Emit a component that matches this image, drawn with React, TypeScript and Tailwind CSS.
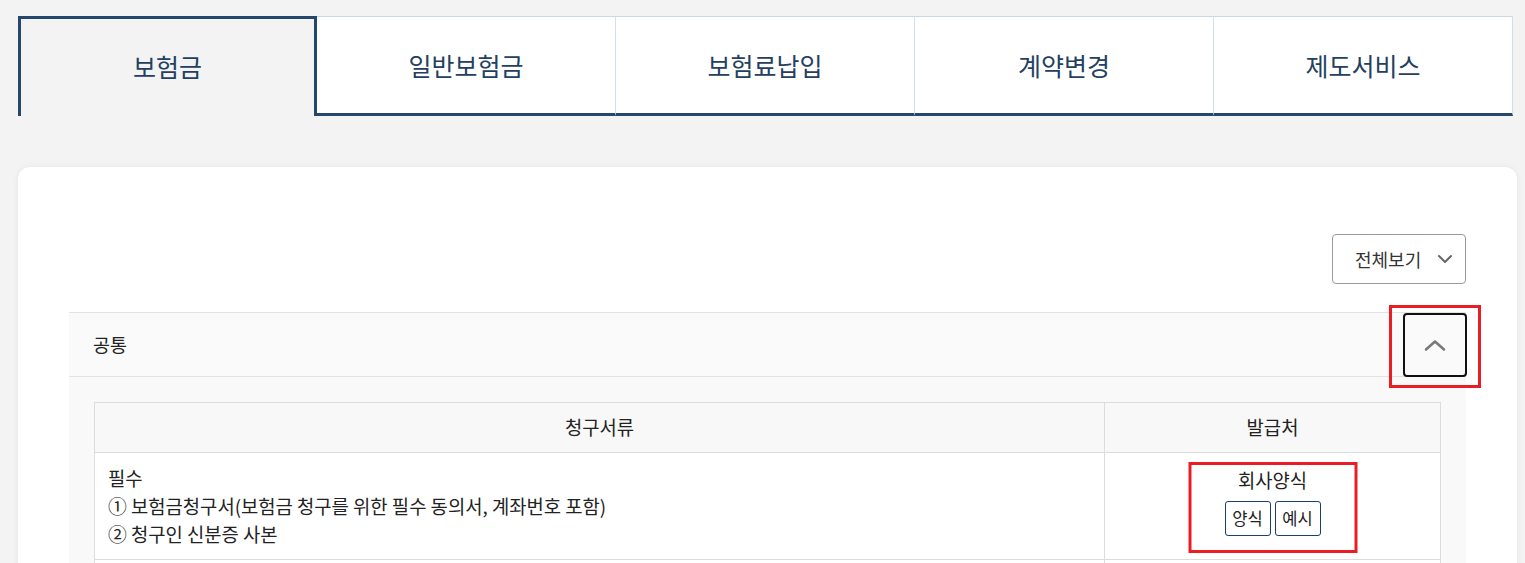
import React, { useState } from 'react';

const tabs = ['보험금', '일반보험금', '보험료납입', '계약변경', '제도서비스'];

const font = { fontFamily: '"Noto Sans CJK KR", "Noto Sans", sans-serif' };

const ChevronDown = () => (
    <svg width="16" height="10" viewBox="0 0 16 10" fill="none">
        <path d="M2 2l6 6 6-6" stroke="#666" strokeWidth="2" strokeLinecap="round" strokeLinejoin="round" />
    </svg>
);

const ChevronUp = () => (
    <svg width="22" height="14" viewBox="0 0 22 14" fill="none">
        <path d="M2 11.5l9-8 9 8" stroke="#7a7a7a" strokeWidth="2.6" strokeLinecap="round" strokeLinejoin="round" />
    </svg>
);

const App = () => {
    const [active, setActive] = useState(0);
    const [open, setOpen] = useState(true);

    return (
        <div className="min-h-[563px] w-full overflow-hidden bg-[#f3f3f3] pt-4" style={font}>
            {/* tabs */}
            <div className="ml-[18px] flex w-[1495px]">
                {tabs.map((t, i) =>
                    i === active ? (
                        <button
                            key={t}
                            onClick={() => setActive(i)}
                            className="flex h-[100px] w-[299px] shrink-0 items-center justify-center border-x-[3px] border-t-[3px] border-[#26476d] bg-[#f3f3f3] pb-[2px] text-[25px] text-[#243f60]"
                        >
                            {t}
                        </button>
                    ) : (
                        <button
                            key={t}
                            onClick={() => setActive(i)}
                            className="flex h-[100px] w-[299px] shrink-0 items-center justify-center border-t border-r border-b-[3px] border-t-[#c8d6e5] border-r-[#d3dee9] border-b-[#26476d] bg-white pt-[2px] text-[25px] text-[#243f60]"
                        >
                            {t}
                        </button>
                    )
                )}
            </div>

            {/* card */}
            <div className="ml-[18px] mt-[51px] w-[1499px] rounded-xl bg-white px-[51px] pt-[67px] pb-10 shadow-[0_0_6px_rgba(0,0,0,0.06)]">
                <div className="flex justify-end">
                    <button className="flex h-[50px] w-[134px] items-center justify-between rounded border border-[#9a9a9a] bg-white pl-[22px] pr-[12px] text-[18px] text-[#333]">
                        <span>전체보기</span>
                        <ChevronDown />
                    </button>
                </div>

                <div className="mt-[28px]">
                    <div className="flex h-[65px] items-center justify-between border-y border-[#e2e2e2] bg-[#fafafa] pl-6">
                        <span className="text-[18.5px] text-[#222]">공통</span>
                        <div className="relative -mr-px">
                            <button
                                onClick={() => setOpen(!open)}
                                className="flex h-[64px] w-[64px] items-center justify-center rounded border-2 border-[#111] bg-[#fafafa]"
                            >
                                {open ? <ChevronUp /> : <span className="rotate-180"><ChevronUp /></span>}
                            </button>
                            <div className="pointer-events-none absolute -top-[8px] -bottom-[11px] -left-[14px] -right-[14px] border-[3px] border-[#ec1c24]" />
                        </div>
                    </div>

                    {open && (
                        <div className="bg-[#f9f9f9] px-[25px] pt-[25px] pb-6">
                            <table className="w-full border-collapse bg-white text-[18.8px] text-[#222]">
                                <thead>
                                    <tr className="h-[50px] bg-[#f8f8f8]">
                                        <th className="w-[1010px] border border-[#dcdcdc] font-normal">청구서류</th>
                                        <th className="border border-[#dcdcdc] font-normal">발급처</th>
                                    </tr>
                                </thead>
                                <tbody>
                                    <tr>
                                        <td className="border border-[#dcdcdc] px-[13px] py-[11px] align-middle leading-[28px]">
                                            <div>필수</div>
                                            <div>① 보험금청구서(보험금 청구를 위한 필수 동의서, 계좌번호 포함)</div>
                                            <div>② 청구인 신분증 사본</div>
                                        </td>
                                        <td className="relative border border-[#dcdcdc] pt-[13px] align-top">
                                            <div className="flex flex-col items-center">
                                                <span className="leading-[28px]">회사양식</span>
                                                <div className="mt-[7px] flex gap-1">
                                                    <button className="h-[35px] w-[46px] rounded-[3px] border border-[#1b3f6e] bg-white text-[16.5px] text-[#222]">양식</button>
                                                    <button className="h-[35px] w-[46px] rounded-[3px] border border-[#1b3f6e] bg-white text-[16.5px] text-[#222]">예시</button>
                                                </div>
                                            </div>
                                            <div className="pointer-events-none absolute left-1/2 top-[9px] h-[91px] w-[169px] -translate-x-1/2 border-[3px] border-[#ec1c24]" />
                                        </td>
                                    </tr>
                                    <tr className="h-[50px]">
                                        <td className="border border-[#dcdcdc]" />
                                        <td className="border border-[#dcdcdc]" />
                                    </tr>
                                </tbody>
                            </table>
                        </div>
                    )}
                </div>
            </div>
        </div>
    );
};

export default App;
